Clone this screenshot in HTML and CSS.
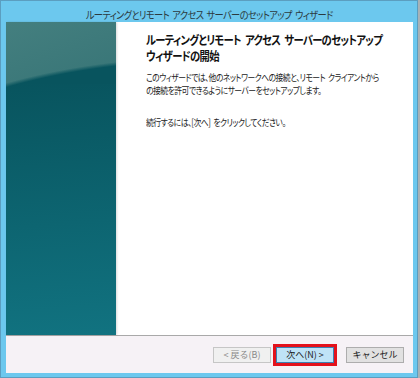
FILE: index.html
```html
<!DOCTYPE html>
<html lang="ja">
<head>
    <meta charset="UTF-8">
    <meta name="viewport" content="width=device-width, initial-scale=1.0">
    <title>ルーティングとリモート アクセス サーバーのセットアップ ウィザード</title>
    <link rel="stylesheet" href="styles.css">
</head>
<body>
    <div class="window">
        <div class="titlebar">
            <span class="title-text">ルーティングとリモート アクセス サーバーのセットアップ ウィザード</span>
        </div>

        <div class="client">
            <div class="main">
                <div class="side"></div>
                <div class="content">
                    <h1>ルーティングとリモート アクセス サーバーのセットアップ<br>ウィザードの開始</h1>
                    <p>このウィザードでは、他のネットワークへの接続と、リモート クライアントから<br>の接続を許可できるようにサーバーをセットアップします。</p>
                    <p class="next-hint">続行するには、[次へ] をクリックしてください。</p>
                </div>
            </div>

            <div class="footer">
                <button class="btn" disabled>&lt; 戻る(B)</button>
                <span class="highlight">
                    <button class="btn btn-default">次へ(N) &gt;</button>
                </span>
                <button class="btn btn-cancel">キャンセル</button>
            </div>
        </div>
    </div>
</body>
</html>
```

FILE: styles.css
```css
body {
    margin: 0;
    background-color: #a7b2b6;
    font-family: 'Noto Sans CJK JP', 'Noto Sans', sans-serif;
    font-feature-settings: "palt";
}

.window {
    width: 416px;
    height: 376px;
    border: 1px solid #5b9ec0;
    background-color: #6cc8ee;
    display: flex;
    flex-direction: column;
}

/* Meiryo UI is narrow, so the text is condensed a little */
.titlebar {
    height: 21px;
    line-height: 23px;
    text-align: center;
    white-space: nowrap;
}

.title-text {
    display: inline-block;
    font-size: 10.5px;
    letter-spacing: -0.7px;
    word-spacing: 2px;
    color: #2b3a40;
    transform: scaleX(0.88);
}

.client {
    flex: 1;
    margin: 0 4px 4px 5px;
    background-color: #fff;
    display: flex;
    flex-direction: column;
}

.main {
    flex: 1;
    display: flex;
}

.side {
    flex: 0 0 110px;
    position: relative;
    background:
        radial-gradient(ellipse 400px 194px at 200px 229px, rgba(8, 84, 94, 1) 98%, rgba(8, 84, 94, 0) 100%),
        linear-gradient(160deg, #447f7f 0%, #2a6a6e 60%);
    box-shadow: 1px 0 2px rgba(0, 0, 0, 0.15);
}

.side::after {
    content: "";
    position: absolute;
    left: 0;
    right: 0;
    top: 62px;
    bottom: 0;
    background: linear-gradient(175deg, rgba(10, 86, 96, 0) 0%, rgba(18, 118, 132, 0.9) 100%);
}

.content {
    flex: 1;
    min-width: 0;
    padding: 10px 0 0 30px;
    white-space: nowrap;
}

h1 {
    margin: 0 0 7px;
    font-size: 12px;
    line-height: 16px;
    font-weight: bold;
    letter-spacing: -0.8px;
    word-spacing: 3px;
    color: #111;
    transform: scaleX(0.86);
    transform-origin: left top;
}

p {
    margin: 0;
    font-size: 9.5px;
    line-height: 12.5px;
    letter-spacing: -0.6px;
    word-spacing: 2px;
    color: #222;
    transform: scaleX(0.82);
    transform-origin: left top;
}

.next-hint {
    margin-top: 20px;
}

.footer {
    height: 37px;
    border-top: 1px solid #a9a9a9;
    background-color: #f6f2f6;
    display: flex;
    align-items: center;
    justify-content: flex-end;
    padding-right: 9px;
}

.btn {
    width: 58px;
    height: 16px;
    padding: 0;
    font-family: inherit;
    font-size: 9px;
    line-height: 14px;
    color: #1a1a1a;
    background-color: #e1e1e1;
    border: 1px solid #adadad;
}

.btn:disabled {
    color: #8a8a8a;
    background-color: #f0f0f0;
    border-color: #c6c6c6;
}

.highlight {
    margin: 0 9px 0 2px;
    border: 3px solid #e3121c;
}

.btn-default {
    display: block;
    background-color: #bfe3f7;
    border-color: #3c7fb1;
}
```
